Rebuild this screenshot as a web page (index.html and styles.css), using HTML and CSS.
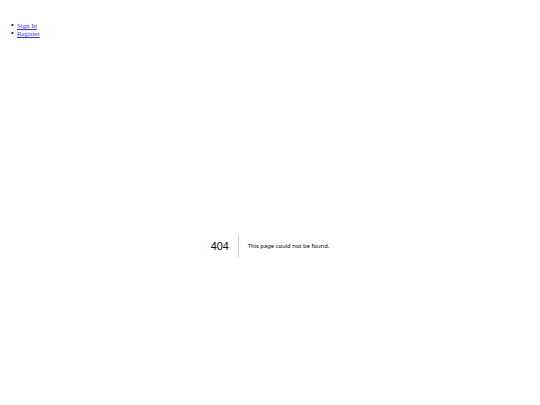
FILE: index.html
```html
<!DOCTYPE html>
<html>
<head>
<meta charset="utf-8">
<link rel="stylesheet" href="styles.css">
</head>
<body>
<ul class="nav">
  <li class="nav-item"><a href="#">Sign In</a></li>
  <li class="nav-item"><a href="#">Register</a></li>
</ul>
<div class="error">
  <div class="error-inner">
    <h1 class="code">404</h1>
    <div class="msg-wrap"><h2 class="msg">This page could not be found.</h2></div>
  </div>
</div>
</body>
</html>
```
FILE: styles.css
```css
html, body {
  margin: 0;
  padding: 0;
  background: #fff;
}
body {
  font-family: "Liberation Serif", serif;
}
.nav {
  margin: 22px 0 0 0;
  padding-left: 18px;
  font-size: 6.8px;
  line-height: 8px;
  list-style: none;
}
.nav-item::before {
  content: "\2022";
  display: inline-block;
  width: 6px;
  margin-left: -7px;
  font-size: 7.5px;
  color: #000;
}
.nav a {
  color: #3333dd;
}
.error {
  height: 416px;
  display: flex;
  flex-direction: column;
  align-items: center;
  justify-content: center;
  text-align: center;
  font-family: "Noto Sans", sans-serif;
  color: #000;
}
.error-inner {
  display: flex;
  align-items: flex-start;
}
.code {
  margin: 0 9px 0 0;
  padding: 0 9px 0 0;
  font-family: "Liberation Sans", sans-serif;
  font-size: 10.8px;
  font-weight: 500;
  line-height: 22px;
  border-right: 1px solid rgba(0, 0, 0, 0.2);
}
.msg-wrap {
  text-align: left;
  line-height: 22px;
  height: 22px;
}
.msg {
  margin: 0;
  padding: 0;
  font-size: 5.85px;
  font-weight: normal;
  line-height: 22px;
}
```
